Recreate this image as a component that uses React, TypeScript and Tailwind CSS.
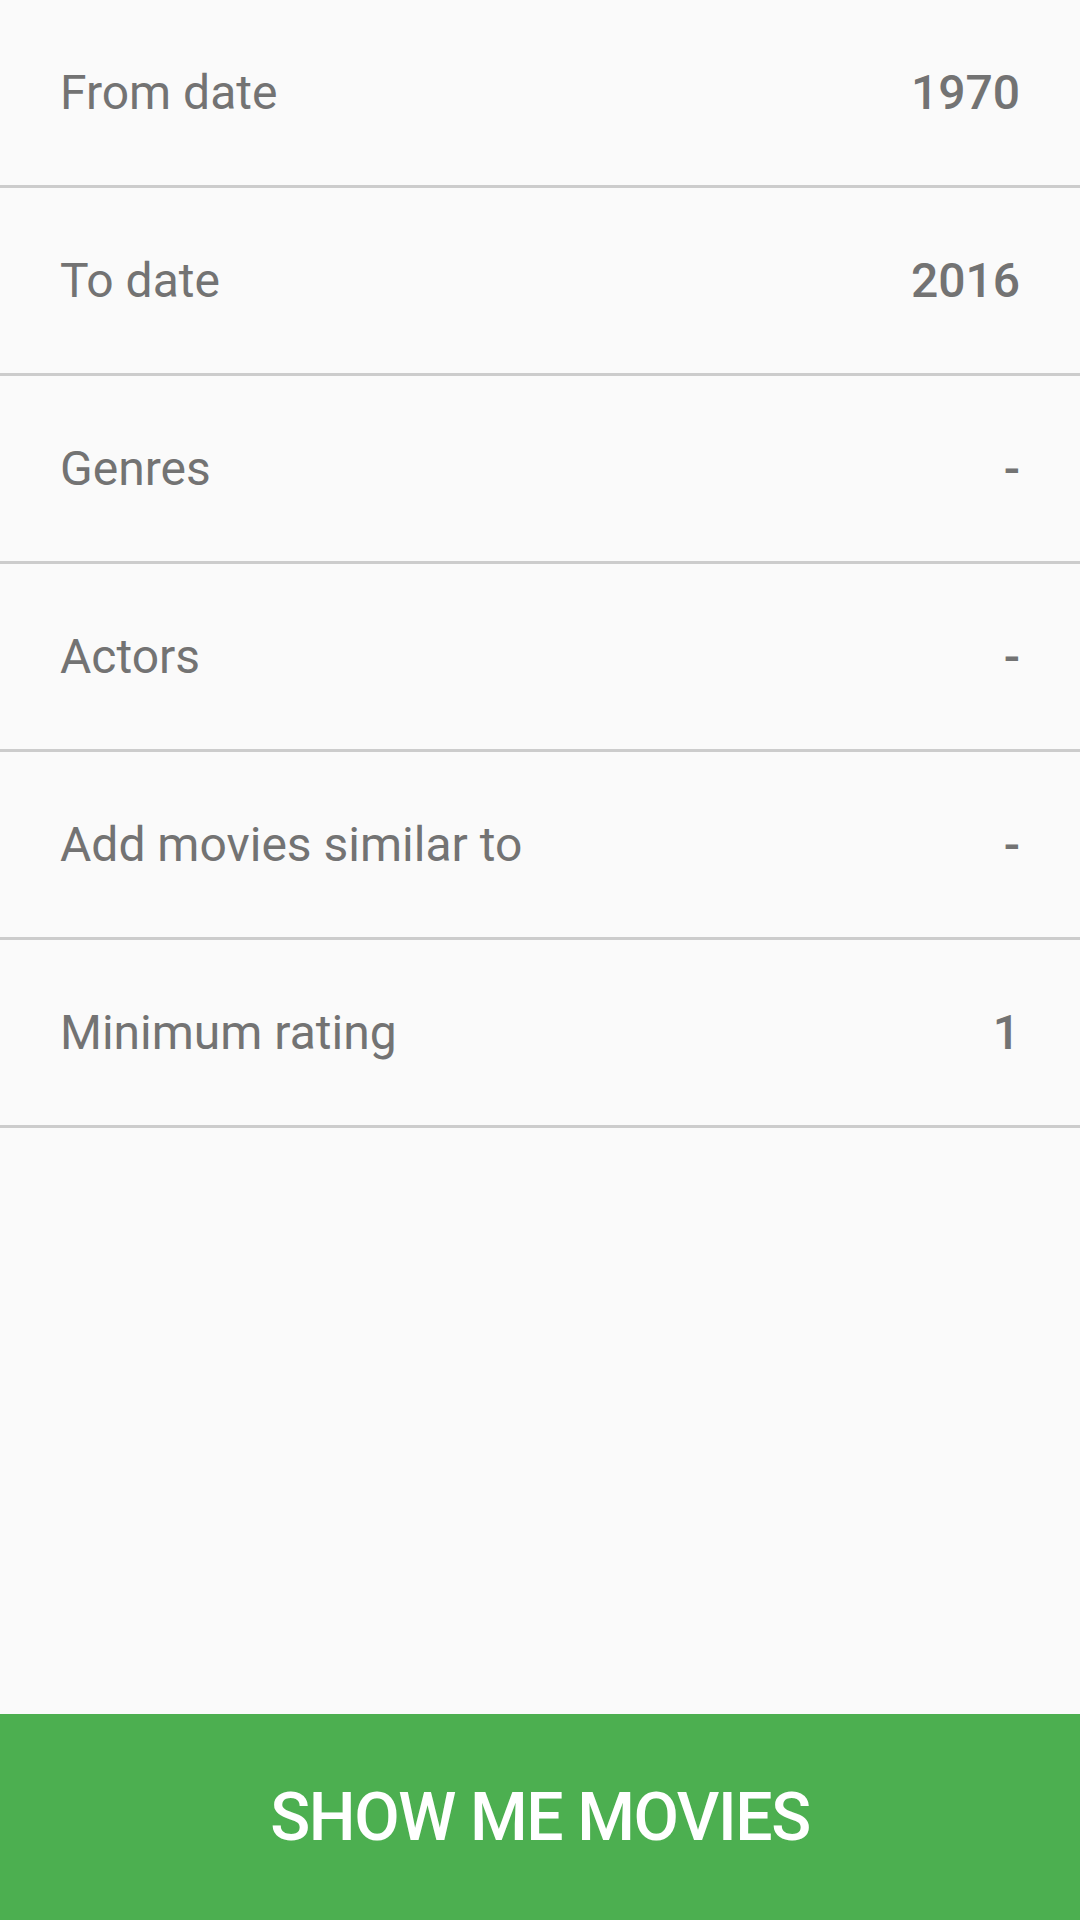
import React from 'react';

const rows = [
  { label: 'From date', value: '1970' },
  { label: 'To date', value: '2016' },
  { label: 'Genres', value: '-' },
  { label: 'Actors', value: '-' },
  { label: 'Add movies similar to', value: '-' },
  { label: 'Minimum rating', value: '1' },
];

const App: React.FC = () => {
  return (
    <div className="w-[1080px] h-[1920px] bg-[#fafafa] flex flex-col font-['Roboto',sans-serif]">
      <div className="flex-1 flex flex-col">
        {rows.map((row) => (
          <div
            key={row.label}
            className="h-[188px] border-b-[3px] border-[#cccccc] flex items-center justify-between px-[60px] text-[48px] text-[#737373]"
          >
            <span>{row.label}</span>
            <span className="font-medium">{row.value}</span>
          </div>
        ))}
      </div>

      {/* Botão principal */}
      <button className="h-[206px] w-full bg-[#4caf50] text-white text-[66px] font-medium tracking-[-1.4px] flex items-center justify-center">
        SHOW ME MOVIES
      </button>
    </div>
  );
};

export default App;
